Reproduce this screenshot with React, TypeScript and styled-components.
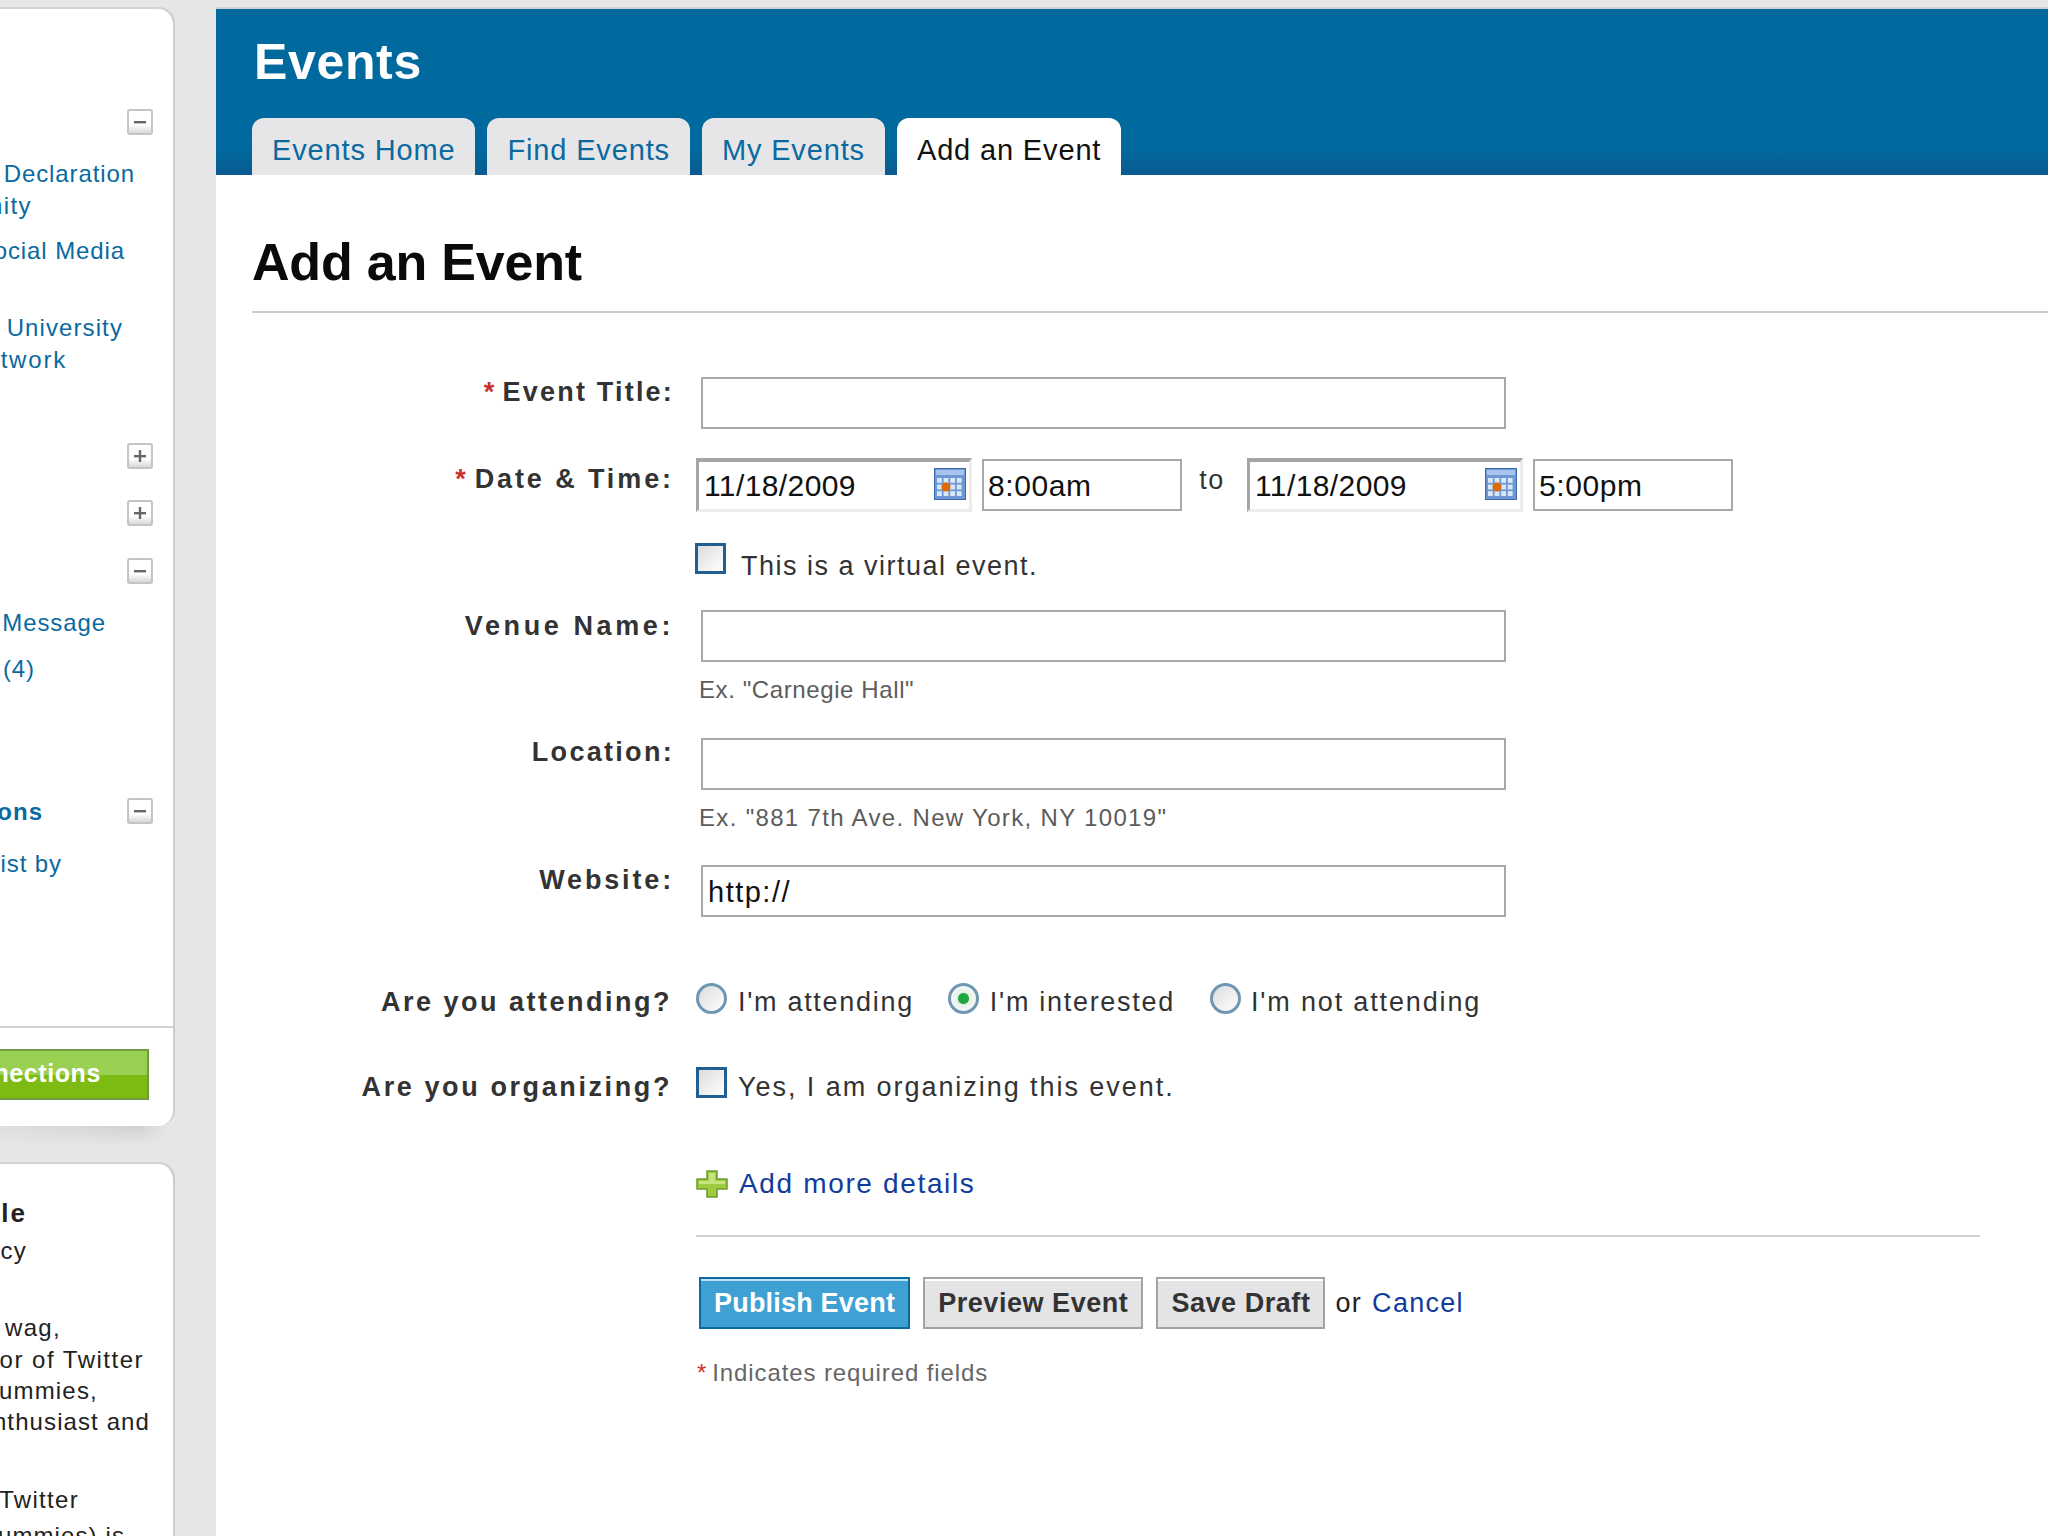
import React from "react";
import styled, { createGlobalStyle } from "styled-components";

const Global = createGlobalStyle`
  html, body { margin: 0; padding: 0; background: #e6e6e8; }
  body { font-family: "Liberation Sans", Arial, sans-serif; overflow: hidden; }
`;

const Page = styled.div`
  width: 2048px; height: 1536px; overflow: hidden; box-sizing: border-box;
  padding-top: 9px; display: flex; align-items: flex-start; background: #e6e6e8;
`;
const SideColumn = styled.aside`
  width: 175px; flex: none; display: flex; flex-direction: column; gap: 38px; margin-right: 41px;
`;
const SideCard = styled.section`
  width: 173px; box-sizing: content-box; background: #fff; border-right: 2px solid #cdcdd0;
  border-radius: 0 16px 16px 0; overflow: hidden; display: flex; flex-direction: column;
  box-shadow: 0 -2px 0 #d2d2d4;
`;
const CardWrap = styled.div`
  position: relative;
  &::after {
    content: ""; position: absolute; left: 0; width: 165px; top: 100%; height: 20px;
    background: linear-gradient(#d0d0d2, #e6e6e8);
    mask-image: linear-gradient(90deg, rgba(0,0,0,.3), #000 85%, transparent);
  }
`;
const ToggleRow = styled.div<{ $top: number }>`
  margin-top: ${p => p.$top}px; height: 26px; display: flex; justify-content: flex-end;
  align-items: center; padding-right: 20px; position: relative;
`;
const Toggle = styled.button`
  width: 26px; height: 26px; flex: none; box-sizing: border-box; padding: 0;
  border: 2px solid #c4c4c6; border-radius: 3px;
  background: linear-gradient(#fff 62%, #d8d8da); display: grid; place-items: center;
`;
const SideLine = styled.div<{ $top?: number; $end: number; $bold?: boolean; $dark?: boolean; $ls?: number }>`
  margin-top: ${p => p.$top ?? 0}px; height: 32px; line-height: 32px; display: flex; justify-content: flex-end;
  padding-right: ${p => 173 - p.$end}px; white-space: nowrap;
  font-size: ${p => (p.$bold ? 26 : 24)}px; letter-spacing: ${p => p.$ls ?? 0.9}px;
  font-weight: ${p => (p.$bold ? 700 : 400)};
  color: ${p => (p.$dark ? "#222" : "#0a6a9f")};
`;
const ToggleText = styled.span`
  position: absolute; right: 130px; top: 0; line-height: 28px; font-size: 24px; font-weight: 700;
  letter-spacing: 1px; color: #0a6a9f; white-space: nowrap;
`;
const SideFoot = styled.div`
  margin-top: 146px; border-top: 2px solid #d2d2d4; padding: 21px 0 26px;
`;
const GreenBtn = styled.div`
  width: 149px; height: 51px; box-sizing: border-box; border: 2px solid #6f9a3e; border-left: 0;
  background: linear-gradient(#9ad052 50%, #7dbb13 50%);
  display: flex; justify-content: flex-end; align-items: center; padding: 0 46px 3px 0;
  color: #fff; font-weight: 700; font-size: 25px; letter-spacing: 0.6px; white-space: nowrap; overflow: hidden;
`;
const Main = styled.main`
  flex: 1; height: 1527px; background: #fff; box-shadow: 0 -2px 0 #d2d2d4;
`;
const Header = styled.header`
  height: 166px; box-sizing: border-box; padding: 28px 0 0 36px;
  background: linear-gradient(#00699e 85%, #0a5a8f);
`;
const Title = styled.h1`
  margin: 0 0 31px 2px; font-size: 50px; line-height: 50px; font-weight: 700; letter-spacing: 0.65px; color: #fff;
`;
const Tabs = styled.nav`
  display: flex; gap: 12px;
`;
const Tab = styled.a<{ $active?: boolean }>`
  height: 57px; box-sizing: border-box; padding: 10px 20px 0; border-radius: 12px 12px 0 0;
  line-height: 44px; font-size: 29px; letter-spacing: 0.85px; white-space: nowrap;
  background: ${p => (p.$active ? "#fff" : "#e6e6e8")};
  color: ${p => (p.$active ? "#111" : "#0a6a9f")};
`;
const Content = styled.div`
  padding: 0 0 0 36px;
`;
const PageTitle = styled.h2`
  margin: 0; padding-top: 57px; height: 138px; box-sizing: border-box; border-bottom: 2px solid #cbcbcb;
  font-size: 52px; line-height: 60px; font-weight: 700; letter-spacing: -0.2px; color: #0a0a0a;
`;
const Form = styled.form`
  margin-top: 64px; display: flex; flex-direction: column;
`;
const Row = styled.div<{ $top?: number }>`
  margin-top: ${p => p.$top ?? 0}px; display: flex; align-items: flex-start;
`;
const Label = styled.label<{ $top?: number; $ls?: number; $pad?: number }>`
  width: 423px; flex: none; box-sizing: border-box; text-align: right; padding-right: ${p => p.$pad ?? 1}px;
  margin-top: ${p => p.$top ?? 0}px; line-height: 32px; font-size: 27px; font-weight: 700;
  letter-spacing: ${p => p.$ls ?? 2.2}px; color: #333; white-space: nowrap;
`;
const Req = styled.span`
  color: #c8312b; font-weight: 700; margin-right: 6px;
`;
const Field = styled.div`
  margin-left: 21px; width: 1284px; display: flex; align-items: flex-start;
`;
const TextInput = styled.input`
  margin: 0 0 0 5px; width: 805px; height: 52px; box-sizing: border-box; padding: 2px 5px 0;
  border: 2px solid #a8a8a8; background: #fff; outline: none; font: 400 29px "Liberation Sans", sans-serif;
  letter-spacing: 1.5px; color: #111;
`;
const Hint = styled.div<{ $top: number; $ls: number }>`
  margin: ${p => p.$top}px 0 0 447px; line-height: 28px; font-size: 24px; letter-spacing: ${p => p.$ls}px; color: #5c5c5c;
`;
const DateBox = styled.div`
  position: relative; width: 276px; height: 54px; flex: none;
`;
const DateInput = styled.input`
  width: 100%; height: 100%; box-sizing: border-box; margin: 0; padding: 0 44px 0 5px; outline: none;
  border-style: solid; border-width: 4px 3px 3px 3px; border-color: #a5a5a5 #ececec #ececec #a5a5a5;
  background: #fff; font: 400 30px "Liberation Sans", sans-serif; letter-spacing: 0.4px; color: #111;
`;
const CalIcon = styled.svg`
  position: absolute; right: 6px; top: 10px; width: 32px; height: 32px;
`;
const TimeInput = styled.input`
  width: 200px; height: 52px; flex: none; margin: 1px 0 0 10px; box-sizing: border-box; padding: 2px 4px 0; outline: none;
  border: 2px solid #a8a8a8; background: #fff; font: 400 30px "Liberation Sans", sans-serif; letter-spacing: 0.6px; color: #111;
`;
const To = styled.span`
  width: 65px; box-sizing: border-box; padding-right: 5px; flex: none; text-align: center; line-height: 44px; font-size: 27px; letter-spacing: 1.5px; color: #333;
`;
const Box = styled.input<{ $left?: number }>`
  appearance: none; margin: 0 0 0 ${p => p.$left ?? 0}px; width: 31px; height: 31px; flex: none; box-sizing: border-box;
  border: 3px solid #215f92; background: linear-gradient(135deg, #dcdcdc, #fff);
`;
const Radio = styled.input`
  appearance: none; margin: 0; width: 31px; height: 31px; flex: none; box-sizing: border-box; border-radius: 50%;
  border: 3px solid #6f97b3; background: linear-gradient(135deg, #dcdcdc, #fff);
  &:checked { background: radial-gradient(circle, #1fa83f 0 5px, #e6efe6 6px, #fff 100%); }
`;
const Option = styled.span<{ $gap: number; $top: number; $after?: number; $ls?: number }>`
  margin-left: ${p => p.$gap}px; margin-top: ${p => p.$top}px; margin-right: ${p => p.$after ?? 0}px;
  line-height: 32px; font-size: 27px; letter-spacing: ${p => p.$ls ?? 1.7}px; color: #333; white-space: nowrap;
`;
const BlueLink = styled.a`
  margin-left: 11px; line-height: 28px; font-size: 28px; letter-spacing: 1.65px; color: #123c9c; white-space: nowrap;
`;
const Divider = styled.hr`
  margin: 37px 0 0 444px; width: 1284px; height: 2px; border: 0; background: #cfcfcf;
`;
const Buttons = styled.div`
  margin: 40px 0 0 447px; display: flex; align-items: center; gap: 13px;
`;
const Btn = styled.button<{ $primary?: boolean; $ls?: number }>`
  height: 52px; box-sizing: border-box; padding: 0 13px; margin: 0; white-space: nowrap;
  font: 700 27px "Liberation Sans", sans-serif; letter-spacing: ${p => p.$ls ?? 0.2}px;
  border: 2px solid ${p => (p.$primary ? "#0b6a9f" : "#a3a3a3")};
  box-shadow: inset 0 2px 0 ${p => (p.$primary ? "#bfe0f2" : "#fff")};
  background: ${p => (p.$primary ? "#3fa1d3" : "#e4e4e6")};
  color: ${p => (p.$primary ? "#fff" : "#333")};
`;
const OrText = styled.span`
  font-size: 27px; letter-spacing: 1.3px; color: #222; margin-left: -3px;
`;
const CancelLink = styled.a`
  color: #123c9c; margin-left: 10px;
`;
const Footnote = styled.div`
  margin: 30px 0 0 445px; line-height: 28px; font-size: 24px; letter-spacing: 0.9px; color: #666; white-space: nowrap;
`;
const FootStar = styled.span`
  color: #c8312b; margin-right: 5px;
`;

function MiniGlyph({ plus }: { plus?: boolean }) {
  return (
    <svg width="16" height="16" viewBox="0 0 16 16">
      <rect x="2" y="7" width="12" height="2.4" fill="#666" />
      {plus && <rect x="6.8" y="2" width="2.4" height="12" fill="#666" />}
    </svg>
  );
}

function Calendar() {
  const cells = [];
  for (let r = 0; r < 3; r++)
    for (let c = 0; c < 4; c++)
      cells.push(<rect key={`${r}-${c}`} x={3 + c * 6.6} y={10 + r * 6.6} width="4.8" height="4.8" fill="#d8e8f8" />);
  return (
    <CalIcon viewBox="0 0 32 32">
      <rect x="0.5" y="0.5" width="31" height="31" fill="#6f97d6" stroke="#3d68ab" />
      <rect x="2" y="2" width="28" height="5" fill="#a9c4ec" />
      {cells}
      <circle cx="12" cy="19" r="4.5" fill="#dd6b05" />
    </CalIcon>
  );
}

function PlusIcon() {
  return (
    <svg width="32" height="28" viewBox="0 0 32 28">
      <path d="M11 1h10v8h10v10H21v8H11v-8H1V9h10z" fill="#9ccb3f" stroke="#6c9a2c" strokeWidth="1.5" strokeLinejoin="round" />
      <path d="M13 3h6v8h10v3H3v-3h10z" fill="#c6e37e" />
    </svg>
  );
}

export default function App() {
  return (
    <Page>
      <Global />
      <SideColumn>
        <CardWrap>
          <SideCard>
            <ToggleRow $top={100}><Toggle><MiniGlyph /></Toggle></ToggleRow>
            <SideLine $top={23} $end={135}>Declaration</SideLine>
            <SideLine $end={32} $ls={1.4}>nity</SideLine>
            <SideLine $top={13} $end={125}>ocial Media</SideLine>
            <SideLine $top={45} $end={123} $ls={1.1}>University</SideLine>
            <SideLine $end={67} $ls={1.8}>twork</SideLine>
            <ToggleRow $top={67}><Toggle><MiniGlyph plus /></Toggle></ToggleRow>
            <ToggleRow $top={31}><Toggle><MiniGlyph plus /></Toggle></ToggleRow>
            <ToggleRow $top={32}><Toggle><MiniGlyph /></Toggle></ToggleRow>
            <SideLine $top={23} $end={106}>Message</SideLine>
            <SideLine $top={14} $end={35}>(4)</SideLine>
            <ToggleRow $top={113}>
              <ToggleText>ons</ToggleText>
              <Toggle><MiniGlyph /></Toggle>
            </ToggleRow>
            <SideLine $top={24} $end={62}>ist by</SideLine>
            <SideFoot><GreenBtn>nections</GreenBtn></SideFoot>
          </SideCard>
        </CardWrap>
        <SideCard>
          <SideLine $top={33} $end={27} $bold $dark $ls={2}>le</SideLine>
          <SideLine $top={6} $end={27} $dark $ls={1.3}>cy</SideLine>
          <SideLine $top={45} $end={61} $dark $ls={1.3}>wag,</SideLine>
          <SideLine $end={144} $dark $ls={1.5}>or of Twitter</SideLine>
          <SideLine $end={98} $dark $ls={1.2} $top={-1}>ummies,</SideLine>
          <SideLine $end={150} $dark $ls={1.1} $top={-1}>nthusiast and</SideLine>
          <SideLine $top={46} $end={79} $dark $ls={1.3}>Twitter</SideLine>
          <SideLine $top={4} $end={125} $dark $ls={1.1}>ummies) is</SideLine>
        </SideCard>
      </SideColumn>
      <Main>
        <Header>
          <Title>Events</Title>
          <Tabs>
            <Tab>Events Home</Tab>
            <Tab>Find Events</Tab>
            <Tab>My Events</Tab>
            <Tab $active>Add an Event</Tab>
          </Tabs>
        </Header>
        <Content>
          <PageTitle>Add an Event</PageTitle>
          <Form>
            <Row>
              <Label $top={-1}><Req>*</Req>Event Title:</Label>
              <Field><TextInput readOnly /></Field>
            </Row>
            <Row $top={29}>
              <Label $top={5} $ls={2.9}><Req>*</Req>Date &amp; Time:</Label>
              <Field>
                <DateBox><DateInput readOnly value="11/18/2009" /><Calendar /></DateBox>
                <TimeInput readOnly value="8:00am" />
                <To>to</To>
                <DateBox><DateInput readOnly value="11/18/2009" /><Calendar /></DateBox>
                <TimeInput readOnly value="5:00pm" />
              </Field>
            </Row>
            <Row $top={31}>
              <Label />
              <Field>
                <Box type="checkbox" readOnly $left={-1} />
                <Option $gap={15} $top={7} $ls={1.5}>This is a virtual event.</Option>
              </Field>
            </Row>
            <Row $top={28}>
              <Label $ls={3.6}>Venue Name:</Label>
              <Field><TextInput readOnly /></Field>
            </Row>
            <Hint $top={14} $ls={0.6}>Ex. "Carnegie Hall"</Hint>
            <Row $top={34}>
              <Label $top={-2} $ls={2.3}>Location:</Label>
              <Field><TextInput readOnly /></Field>
            </Row>
            <Hint $top={14} $ls={1.33}>Ex. "881 7th Ave. New York, NY 10019"</Hint>
            <Row $top={33}>
              <Label $top={-1} $ls={2.85}>Website:</Label>
              <Field><TextInput readOnly value="http://" /></Field>
            </Row>
            <Row $top={66}>
              <Label $top={3} $ls={2.5} $pad={3}>Are you attending?</Label>
              <Field>
                <Radio type="radio" name="att" readOnly />
                <Option $gap={11} $top={3} $after={34}>I'm attending</Option>
                <Radio type="radio" name="att" readOnly defaultChecked />
                <Option $gap={11} $top={3} $after={35}>I'm interested</Option>
                <Radio type="radio" name="att" readOnly />
                <Option $gap={10} $top={3} $ls={1.85}>I'm not attending</Option>
              </Field>
            </Row>
            <Row $top={49}>
              <Label $top={4} $ls={2.6} $pad={3}>Are you organizing?</Label>
              <Field>
                <Box type="checkbox" readOnly />
                <Option $gap={11} $top={4} $ls={1.95}>Yes, I am organizing this event.</Option>
              </Field>
            </Row>
            <Row $top={67}>
              <Label />
              <Field>
                <PlusIcon />
                <BlueLink>Add more details</BlueLink>
              </Field>
            </Row>
            <Divider />
            <Buttons>
              <Btn type="button" $primary>Publish Event</Btn>
              <Btn type="button" $ls={0.55}>Preview Event</Btn>
              <Btn type="button" $ls={0.55}>Save Draft</Btn>
              <OrText>or<CancelLink>Cancel</CancelLink></OrText>
            </Buttons>
            <Footnote><FootStar>*</FootStar>Indicates required fields</Footnote>
          </Form>
        </Content>
      </Main>
    </Page>
  );
}
